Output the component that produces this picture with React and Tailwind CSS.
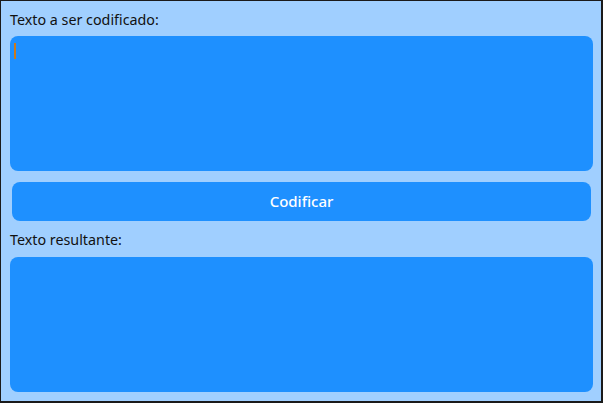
import React from 'react';

const font = { fontFamily: '"Noto Sans", "DejaVu Sans", sans-serif' };

export default function App() {
  return (
    <div
      className="w-[603px] h-[403px] bg-[#a0cfff] border-t border-l border-r-2 border-b-2 border-[#1a1a1a] flex flex-col pl-[9px] pr-[8px] pt-[9px]"
      style={font}
    >
      <div className="h-[20px] text-[14.3px] leading-[20px] text-[#111]">Texto a ser codificado:</div>
      <div className="mt-[6px] h-[135px] rounded-[8px] bg-[#1e90ff] pl-[4px] pt-[7px]">
        <div className="w-[1.5px] h-[16px] bg-[#c87a1e]" />
      </div>
      <button className="mt-[11px] mx-[2px] h-[39px] rounded-[8px] bg-[#1e90ff] text-white text-[15px] font-medium">
        Codificar
      </button>
      <div className="mt-[9px] h-[20px] text-[14.3px] leading-[20px] text-[#111]">Texto resultante:</div>
      <div className="mt-[7px] h-[135px] rounded-[8px] bg-[#1e90ff]" />
    </div>
  );
}
